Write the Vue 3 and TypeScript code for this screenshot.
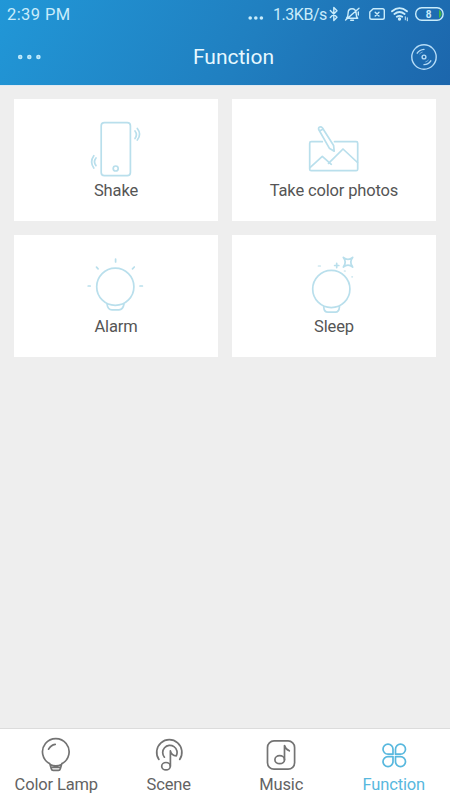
<script setup lang="ts">
import { ref } from 'vue'

type TabName = 'Color Lamp' | 'Scene' | 'Music' | 'Function'

const cards: string[] = ['Shake', 'Take color photos', 'Alarm', 'Sleep']
const tabs: TabName[] = ['Color Lamp', 'Scene', 'Music', 'Function']
const activeTab = ref<TabName>('Function')
</script>

<template>
  <div class="screen">
    <header class="header">
      <div class="status">
        <span class="time">2:39 PM</span>
        <span class="spacer"></span>
        <svg class="dots-small" width="16" height="6" viewBox="0 0 16 6">
          <circle cx="2.2" cy="3" r="1.8" /><circle cx="7.8" cy="3" r="1.8" /><circle cx="13.4" cy="3" r="1.8" />
        </svg>
        <span class="speed">1.3KB/s</span>
        <svg class="status-icons" width="120" height="20" viewBox="0 0 120 20">
          <path d="M5.3 6.6 12 13.2 8.8 16.6V3.4L12 6.8 5.3 13.4" />
          <path d="M21.5 14.2h11.200c-1.500-1.400-1.600-3-1.600-5 0-2.600-1.600-4.400-4-4.400s-4 1.800-4 4.400c0 2-.1 3.600-1.600 5zM25.700 16.300h2.800M20.600 16 34 4.200" />
          <path d="M33.300 8v3" />
          <path d="M48.200 4.700h9.300q1.800 0 1.800 1.800v7q0 1.800-1.800 1.800H46.600q-1.800 0-1.800-1.800V8zM50.200 8.200l3.800 3.800M54 8.200l-3.800 3.800" />
          <path class="thick" d="M67 7.300Q74.500.9 82 7.300M69.400 10Q74.500 5.900 79.600 10M71.800 12.800q2.700-2 5.400 0" />
          <circle class="solid" cx="74.500" cy="15" r="1" />
          <path class="thin" d="M80.300 12.800v3M82.300 13.800v3" />
          <rect x="90.700" y="3.800" width="27.400" height="12.400" rx="6" />
          <path class="charge" d="M114 5.700q2.600 1.500 2.600 4.300T114 14.300z" />
          <text x="103.700" y="13.600">8</text>
        </svg>
      </div>
      <div class="nav">
        <svg class="more" width="26" height="8" viewBox="0 0 26 8">
          <circle cx="3.200" cy="4" r="1.500" /><circle cx="12.300" cy="4" r="1.500" /><circle cx="21.400" cy="4" r="1.500" />
        </svg>
        <h1>Function</h1>
        <svg class="disc" width="28" height="28" viewBox="0 0 28 28">
          <circle cx="14" cy="14" r="12.200" />
          <circle cx="14" cy="14" r="1.900" />
          <path d="M7.200 10.200q2.300-3.500 6.800-3.800M20.800 17.800q-2.300 3.500-6.800 3.800" />
          <path class="groove" d="M9.700 10.800q1.200-1.300 2.600-1.700M18.300 17.200q-1.200 1.300-2.600 1.700" />
        </svg>
      </div>
    </header>

    <main class="grid">
      <section v-for="card in cards" :key="card" class="card">
        <svg class="card-icon" width="70" height="60" viewBox="0 0 70 60">
          <g v-if="card === 'Shake'">
            <rect x="20.200" y="3.600" width="29.200" height="53" rx="3.200" />
            <circle cx="34.700" cy="49.500" r="2.500" />
            <path d="M54 12q2.800 3.700 0 7.500M56.300 9.500q4.600 5.800 0 11.500M15 39q-3 3.800 0 7.600M12.800 36.700q-4.300 6.100 0 12.300" />
          </g>
          <g v-else-if="card === 'Take color photos'">
            <path d="M23.300 22.700H12.200q-1.500 0-1.500 1.500v26q0 1.500 1.500 1.500h45q1.500 0 1.500-1.500v-26q0-1.500-1.500-1.500H35.500" />
            <path d="M11 48.600 23.300 37.300 32.300 45.300M29.500 44.300 44 30 58.500 43.500" />
            <path d="M19.700 10.500q-.5-2 1-2.500t2.600.7L34.600 26.500l.6 5.700-4.900-3zM20.500 12l3.800-2.100" />
          </g>
          <g v-else-if="card === 'Alarm'">
            <circle cx="34.300" cy="31.700" r="18.600" />
            <path d="M26 49q.7 5.800 5 5.800h7q4 0 5-5.800" />
            <path d="M34.600 4V7M15.500 12.200l1.600 1.600M51.500 13.800l1.800-1.800M7.200 31h2M59 31h2.400" />
          </g>
          <g v-else>
            <circle cx="32.300" cy="34" r="18.600" />
            <path d="M24.700 51.600q.3 5.600 4.300 5.600h7.500q3.500 0 4-5.600" />
            <path d="M44.300 2.400q4.700 3.900 9.400 0-3.900 4.800 0 9.600-4.700-3.900-9.400 0 3.900-4.800 0-9.600z" />
            <path d="M37.700 8.400v4.200M35.600 10.500h4.200" />
            <path class="faint" d="M19.500 11h1.800M45.500 16h.6M53 21.800h.3" />
          </g>
        </svg>
        <span class="card-label">{{ card }}</span>
      </section>
    </main>

    <nav class="tabs">
      <button
        v-for="tab in tabs"
        :key="tab"
        type="button"
        class="tab"
        :class="{ active: tab === activeTab }"
        @click="activeTab = tab"
      >
        <svg width="40" height="36" viewBox="0 0 40 36">
          <g v-if="tab === 'Color Lamp'">
            <path d="M13.800 26.700A13.300 13.300 0 1 1 25.800 26.700M13.800 26.700l1.500 5q.4 1.600 1.800 1.600h5.400q1.400 0 1.800-1.600l1.500-5M14 27.500q5.800 2.600 11.600 0M15 30.300h9.600M12.600 12.200q2.200-4.300 6.600-4.900" />
          </g>
          <g v-else-if="tab === 'Scene'">
            <path d="M9.900 22.400a12.600 12.600 0 1 1 20.800 0" />
            <path d="M15.400 20.200a7.200 7.200 0 1 1 11.900-1.400c-3.400-.2-5.300-2-5.900-5V29" />
            <ellipse cx="17" cy="29.200" rx="4.300" ry="3.700" />
          </g>
          <g v-else-if="tab === 'Music'">
            <rect x="6.500" y="3.900" width="27.100" height="28.300" rx="6.500" />
            <ellipse cx="18.700" cy="22.700" rx="4.800" ry="4" />
            <path d="M23.500 22.700V8.500q.6 3.200 4.800 5.300" />
          </g>
          <g v-else>
            <path d="M19 17.200h-5a5 5 0 1 1 5-5zM21.500 17.200h5a5 5 0 1 0-5-5zM19 19.600h-5a5 5 0 1 0 5 5zM21.500 19.600h5a5 5 0 1 1-5 5z" />
          </g>
        </svg>
        <span>{{ tab }}</span>
      </button>
    </nav>
  </div>
</template>

<style>
body {
  margin: 0;
}
</style>

<style scoped>
.screen {
  display: flex;
  flex-direction: column;
  width: 450px;
  height: 800px;
  background: #eeeeee;
  font-family: Roboto, sans-serif;
  overflow: hidden;
}
svg {
  display: block;
  flex: none;
  fill: none;
  stroke-linecap: round;
  stroke-linejoin: round;
}
.header {
  flex: none;
  height: 86px;
  box-sizing: border-box;
  background: linear-gradient(120deg, #2197d7, #207fc0 55%, #1c66ac);
  border-bottom: 1px solid #dfe9f2;
}
.status {
  display: flex;
  align-items: center;
  height: 28px;
  padding: 0 5px 0 7px;
  color: #c9ecfb;
}
.time {
  padding-top: 2px;
  font-size: 16.5px;
  line-height: 28px;
  letter-spacing: 0.4px;
}
.spacer {
  flex: 1;
}
.dots-small {
  margin: 7px 9px 0 0;
  fill: #c9ecfb;
}
.speed {
  width: 52px;
  padding-top: 1px;
  font-size: 16px;
  letter-spacing: -0.45px;
  white-space: nowrap;
}
.status-icons {
  stroke: #c9ecfb;
  stroke-width: 1.4;
}
.status-icons .thick {
  stroke-width: 1.8;
}
.status-icons .thin {
  stroke-width: 1;
}
.status-icons .solid {
  fill: #c9ecfb;
}
.status-icons .charge {
  fill: #42b549;
  stroke: none;
}
.status-icons text {
  fill: #c9ecfb;
  stroke: none;
  font-size: 10px;
  font-weight: 700;
  text-anchor: middle;
}
.nav {
  display: grid;
  grid-template-columns: 50px 1fr 50px;
  align-items: center;
  height: 57px;
  padding: 0 12px 0 14px;
}
.more {
  margin-left: 3px;
  fill: #7fc4ea;
  stroke: #c0eafb;
  stroke-width: 1.6;
}
.nav h1 {
  margin: 0;
  padding-left: 15px;
  padding-top: 1px;
  color: #e6f8ff;
  font-size: 21px;
  font-weight: 400;
  text-align: center;
}
.disc {
  justify-self: end;
  stroke: #b5dcf7;
  stroke-width: 1.4;
}
.disc .groove {
  stroke-width: 1;
  opacity: 0.55;
}
.grid {
  flex: 1;
  display: grid;
  grid-template-columns: 204px 204px;
  grid-auto-rows: 122px;
  gap: 14px;
  align-content: start;
  padding: 13px 14px;
}
.card {
  display: flex;
  flex-direction: column;
  align-items: center;
  box-sizing: border-box;
  padding-top: 20px;
  background: #ffffff;
}
.card-icon {
  stroke: #b9dfec;
  stroke-width: 1.7;
}
.card-icon .faint {
  stroke: #cfe8f0;
}
.card-label {
  margin-top: 2px;
  color: #555555;
  font-size: 16.5px;
  line-height: 20px;
  letter-spacing: -0.15px;
}
.tabs {
  display: grid;
  grid-template-columns: repeat(4, 1fr);
  flex: none;
  height: 72px;
  box-sizing: border-box;
  border-top: 1px solid #dcdcdc;
  background: #ffffff;
}
.tab {
  display: flex;
  flex-direction: column;
  align-items: center;
  padding: 8px 0 0;
  border: 0;
  background: none;
  color: #636363;
  font: 16.5px/20px Roboto, sans-serif;
  letter-spacing: -0.15px;
}
.tab svg {
  stroke: #737373;
  stroke-width: 1.7;
}
.tab span {
  margin-top: 2px;
}
.tab.active {
  color: #58b8de;
}
.tab.active svg {
  stroke: #58b8de;
}
</style>
